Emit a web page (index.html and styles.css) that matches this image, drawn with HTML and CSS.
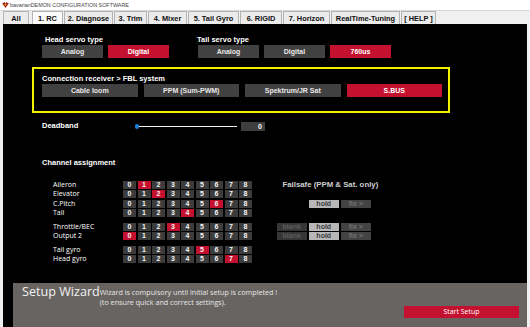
FILE: index.html
```html
<!DOCTYPE html>
<html>
<head>
<meta charset="utf-8">
<link rel="stylesheet" href="styles.css">
</head>
<body>
<div class="titlebar">
  <svg class="appicon" viewBox="0 0 8 7"><path d="M0 2 L3 0 L4 2 L5 0 L8 2 L6 4 L4 7 L2 4 Z" fill="#a3261e"/><circle cx="4" cy="3" r="1" fill="#e0b020"/></svg>
  <span>bavarianDEMON CONFIGURATION SOFTWARE</span>
</div>
<div class="tabs">
  <div class="tab w-all">All</div>
  <div class="tab w-rc active">1. RC</div>
  <div class="tab w-diag">2. Diagnose</div>
  <div class="tab w-trim">3. Trim</div>
  <div class="tab w-mix">4. Mixer</div>
  <div class="tab w-tail">5. Tail Gyro</div>
  <div class="tab w-rigid">6. RIGID</div>
  <div class="tab w-hor">7. Horizon</div>
  <div class="tab w-rt">RealTime-Tuning</div>
  <div class="tab w-help">[ HELP ]</div>
</div>
<div class="content">
  <div class="servo-row">
    <div class="group">
      <div class="label head-label">Head servo type</div>
      <div class="btns">
        <span class="btn">Analog</span>
        <span class="btn on">Digital</span>
      </div>
    </div>
    <div class="group tail-group">
      <div class="label">Tail servo type</div>
      <div class="btns">
        <span class="btn">Analog</span>
        <span class="btn">Digital</span>
        <span class="btn on">760us</span>
      </div>
    </div>
  </div>

  <div class="conn-box">
    <div class="label">Connection receiver &gt; FBL system</div>
    <div class="btns conn-btns">
      <span class="btn wide">Cable loom</span>
      <span class="btn wide">PPM (Sum-PWM)</span>
      <span class="btn wide">Spektrum/JR Sat</span>
      <span class="btn wide on">S.BUS</span>
    </div>
  </div>

  <div class="deadband">
    <div class="label db-label">Deadband</div>
    <div class="slider"><span class="track"></span><span class="thumb"></span></div>
    <div class="db-value">0</div>
  </div>

  <div class="label section-title">Channel assignment</div>

  <div class="channels">
    <div class="ch-group">
      <div class="ch-row">
        <span class="ch-name">Aileron</span>
        <div class="cells"><span>0</span><span class="on">1</span><span>2</span><span>3</span><span>4</span><span>5</span><span>6</span><span>7</span><span>8</span></div>
        <div class="fs"><span class="fs-title">Failsafe (PPM &amp; Sat. only)</span></div>
      </div>
      <div class="ch-row">
        <span class="ch-name">Elevator</span>
        <div class="cells"><span>0</span><span>1</span><span class="on">2</span><span>3</span><span>4</span><span>5</span><span>6</span><span>7</span><span>8</span></div>
      </div>
      <div class="ch-row">
        <span class="ch-name">C.Pitch</span>
        <div class="cells"><span>0</span><span>1</span><span>2</span><span>3</span><span>4</span><span>5</span><span class="on">6</span><span>7</span><span>8</span></div>
        <div class="fs"><span class="fs-empty"></span><span class="fs-hold">hold</span><span class="fs-fix">fix &gt;</span></div>
      </div>
      <div class="ch-row">
        <span class="ch-name">Tail</span>
        <div class="cells"><span>0</span><span>1</span><span>2</span><span>3</span><span class="on">4</span><span>5</span><span>6</span><span>7</span><span>8</span></div>
      </div>
    </div>

    <div class="ch-group">
      <div class="ch-row">
        <span class="ch-name">Throttle/BEC</span>
        <div class="cells"><span>0</span><span>1</span><span>2</span><span class="on">3</span><span>4</span><span>5</span><span>6</span><span>7</span><span>8</span></div>
        <div class="fs"><span class="fs-blank">blank</span><span class="fs-hold">hold</span><span class="fs-fix">fix &gt;</span></div>
      </div>
      <div class="ch-row">
        <span class="ch-name">Output 2</span>
        <div class="cells"><span class="on">0</span><span>1</span><span>2</span><span>3</span><span>4</span><span>5</span><span>6</span><span>7</span><span>8</span></div>
        <div class="fs"><span class="fs-blank">blank</span><span class="fs-hold">hold</span><span class="fs-fix">fix &gt;</span></div>
      </div>
    </div>

    <div class="ch-group">
      <div class="ch-row">
        <span class="ch-name">Tail gyro</span>
        <div class="cells"><span>0</span><span>1</span><span>2</span><span>3</span><span>4</span><span class="on">5</span><span>6</span><span>7</span><span>8</span></div>
      </div>
      <div class="ch-row">
        <span class="ch-name">Head gyro</span>
        <div class="cells"><span>0</span><span>1</span><span>2</span><span>3</span><span>4</span><span>5</span><span>6</span><span class="on">7</span><span>8</span></div>
      </div>
    </div>
  </div>

  <div class="wizard">
    <div class="wiz-title">Setup Wizard</div>
    <div class="wiz-text">Wizard is compulsory until initial setup is completed !<br>(to ensure quick and correct settings).</div>
    <div class="wiz-btn">Start Setup</div>
  </div>
</div>
</body>
</html>
```

FILE: styles.css
```css
* { box-sizing: border-box; margin: 0; padding: 0; }
html, body { width: 530px; height: 327px; overflow: hidden; }
body {
  background: #f0f0f0;
  font-family: "Liberation Sans", Arial, sans-serif;
  color: #fff;
}

/* title bar */
.titlebar {
  height: 10px;
  background: #fff;
  display: flex;
  align-items: center;
  padding-left: 2px;
  font-size: 5.4px;
  color: #444;
}
.appicon { width: 7px; height: 6px; margin-right: 1px; }

/* tabs */
.tabs {
  height: 14px;
  display: flex;
  align-items: flex-end;
  padding-left: 3px;
  background: #f0f0f0;
  border-top: 1px solid #d8d8d8;
}
.tab {
  height: 13px;
  display: flex;
  align-items: center;
  justify-content: center;
  font-size: 7.4px;
  font-weight: bold;
  color: #111;
  background: #ebebeb;
  border: 1px solid #b4b4b4;
  border-bottom: none;
  margin-right: 1px;
}
.tab.active { background: #fafafa; }
.w-all { width: 26px; margin-right: 3px; }
.w-rc { width: 31px; }
.w-diag { width: 49px; }
.w-trim { width: 33px; }
.w-mix { width: 39px; }
.w-tail { width: 51px; }
.w-rigid { width: 42px; }
.w-hor { width: 47px; }
.w-rt { width: 69px; }
.w-help { width: 35px; }

/* content */
.content {
  margin: 0 3px;
  height: 303px;
  background: #000;
  display: flex;
  flex-direction: column;
}
.label {
  font-size: 7.5px;
  font-weight: bold;
  line-height: 10px;
  color: #fff;
}
.btns { display: flex; gap: 5px; }
.btn {
  width: 61px;
  height: 13px;
  display: flex;
  align-items: center;
  justify-content: center;
  background: #414141;
  color: #e8e8e8;
  font-size: 7px;
  font-weight: bold;
}
.btn.on { background: #c4112f; color: #fff; }

.servo-row {
  display: flex;
  padding-top: 11px;
  margin-left: 39px;
  gap: 29px;
}
.head-label { padding-left: 3px; }
.tail-group .label { margin-left: -1px; }

.conn-box {
  margin-top: 9px;
  margin-left: 29px;
  width: 418px;
  height: 46px;
  border: 2px solid #f2f200;
  padding: 5px 0 0 8px;
}
.conn-btns { gap: 6px; }
.btn.wide { width: 95.5px; }

.deadband {
  margin-top: 8px;
  margin-left: 39px;
  display: flex;
  align-items: center;
  height: 10px;
}
.db-label { width: 95px; }
.slider { position: relative; width: 100px; height: 10px; }
.track {
  position: absolute;
  left: 0; right: 0; top: 4.5px;
  height: 1px;
  background: #f0f0f0;
}
.thumb {
  position: absolute;
  left: -2px; top: 2.5px;
  width: 4px; height: 5px;
  border-radius: 2px;
  background: #1e7fd8;
}
.db-value {
  margin-left: 4px;
  width: 24px;
  height: 9px;
  background: #3e3e3e;
  font-size: 7px;
  font-weight: bold;
  line-height: 9px;
  text-align: right;
  padding-right: 3px;
}

.section-title { margin-top: 27px; margin-left: 39px; }

.channels {
  margin-top: 13px;
  margin-left: 50px;
  display: flex;
  flex-direction: column;
  gap: 6px;
}
.ch-group { display: flex; flex-direction: column; gap: 1.3px; }
.ch-row { display: flex; height: 8px; align-items: center; }
.ch-name {
  width: 70px;
  font-family: "Open Sans", sans-serif;
  font-size: 7px;
  line-height: 8px;
  color: #fff;
}
.cells { display: flex; gap: 1.5px; }
.cells span {
  width: 13px;
  height: 8px;
  background: #3c3c3c;
  font-size: 7px;
  font-weight: bold;
  line-height: 8px;
  text-align: center;
  color: #f4f4f4;
}
.cells span.on { background: #c4112f; }

.fs { display: flex; gap: 1.5px; margin-left: 24.5px; height: 8px; }
.fs span {
  width: 30.5px;
  height: 8px;
  font-size: 7px;
  font-weight: bold;
  line-height: 8px;
  text-align: center;
}
.fs .fs-title {
  width: auto;
  padding-left: 6px;
  color: #cfcfcf;
  font-size: 7.8px;
  white-space: nowrap;
}
.fs-hold { background: #b7b7b7; color: #3b3b3b; }
.fs-blank { background: #363636; color: #5c5c5c; }
.fs-fix { background: #434343; color: #727272; }

/* wizard */
.wizard {
  margin-top: auto;
  margin-left: 10px;
  height: 44px;
  background: #686462;
  display: flex;
  padding-left: 9px;
  font-family: "Open Sans", sans-serif;
}
.wiz-title {
  font-size: 12.6px;
  line-height: 16px;
  padding-top: 1px;
  color: #f2f2f2;
  white-space: nowrap;
}
.wiz-text {
  padding-top: 4px;
  font-size: 7.2px;
  line-height: 10px;
  color: #e6e6e6;
  white-space: nowrap;
}
.wiz-btn {
  margin-left: auto;
  margin-right: 8px;
  align-self: flex-end;
  margin-bottom: 9px;
  width: 115px;
  height: 12px;
  background: #c4112f;
  color: #fff;
  font-size: 7px;
  line-height: 12px;
  text-align: center;
}
```
